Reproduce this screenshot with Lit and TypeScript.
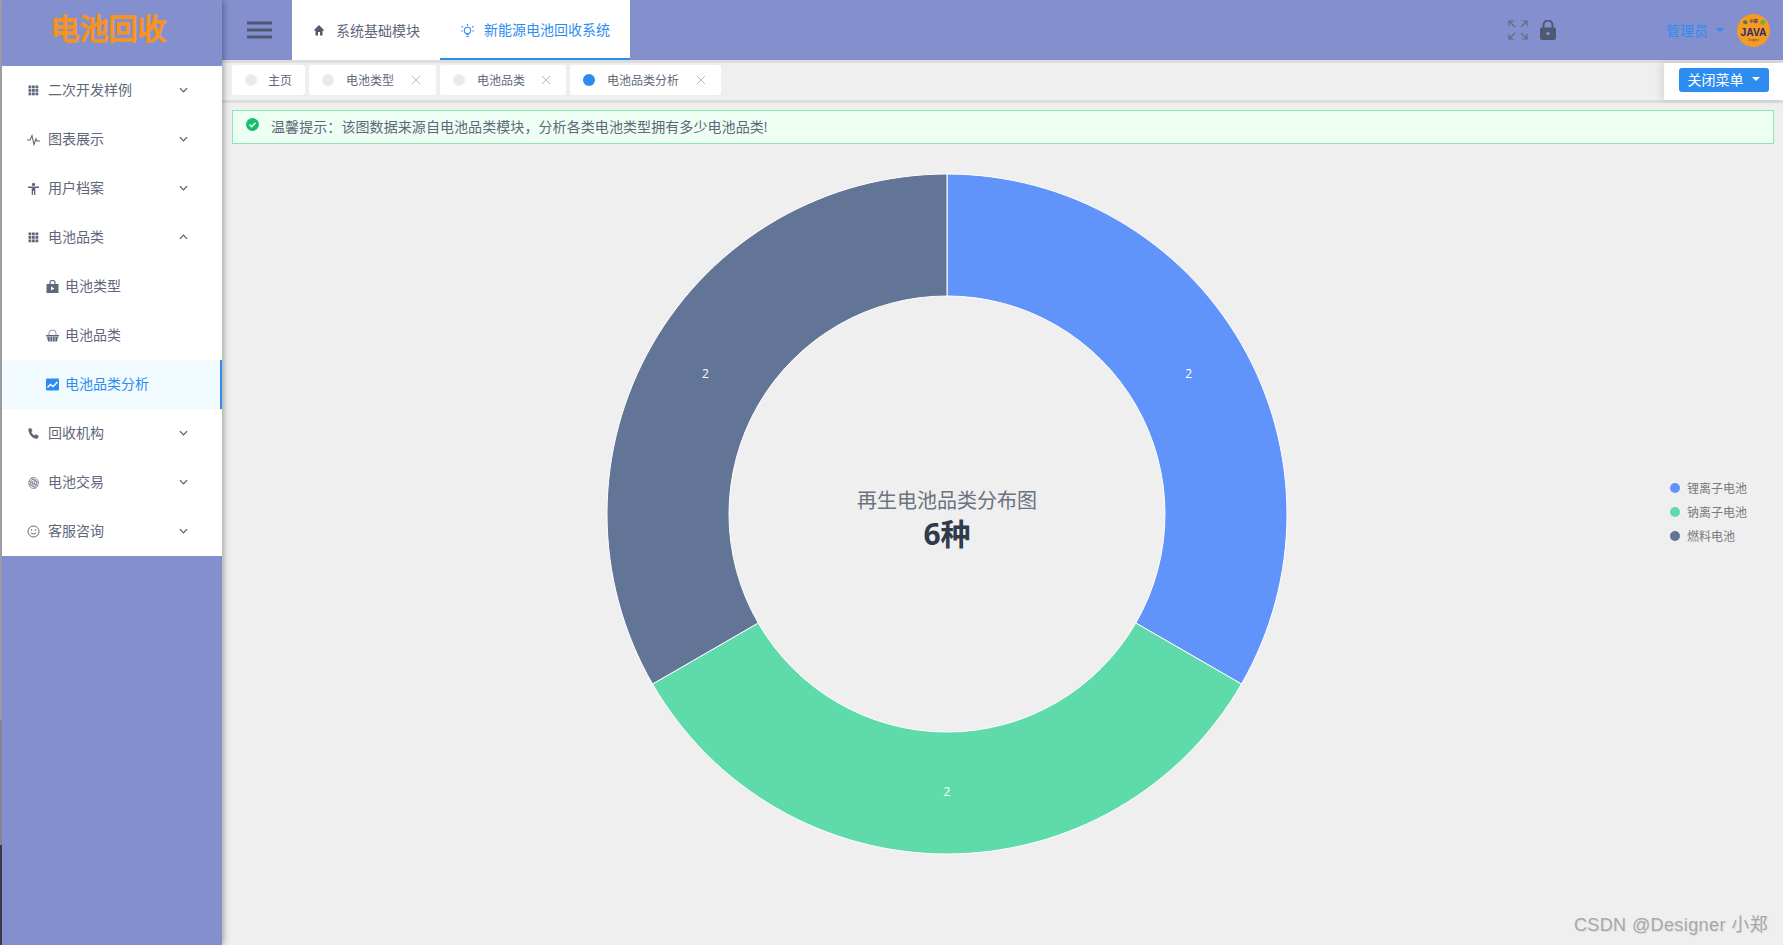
import { LitElement, html, css, svg } from "lit";
import { customElement } from "lit/decorators.js";

const I = {
  grid: svg`<g fill="currentColor">${[0, 1, 2].flatMap((y) => [0, 1, 2].map((x) => svg`<rect x=${1.5 + x * 3.5} y=${1.5 + y * 3.5} width="2.800" height="2.800"/>`))}</g>`,
  pulse: svg`<path d="M0 7h3l2-4.500 2 9 2-5.500 1 2h3" fill="none" stroke="currentColor" stroke-width="1.100"/>`,
  person: svg`<g fill="currentColor"><circle cx="6.500" cy="2.400" r="1.600"/><path d="M1 4.600h11v1.300H8.300V13H7V9H6v4H4.700V5.900H1z"/></g>`,
  bag: svg`<path d="M.5 4h12v9.500H.5z" fill="currentColor"/><path d="M4 4V2.500a2.500 2 0 0 1 5 0V4" fill="none" stroke="currentColor" stroke-width="1.200"/><path d="M5 6.500l3.500 2-3.500 2z" fill="#fff"/>`,
  basket: svg`<path d="M3 6V4a3.500 3 0 0 1 7 0v2" fill="none" stroke="#8a93a5" stroke-width="1"/><path d="M0 6h13v1.500H0zM1 8h11l-1 4.500H2z" fill="currentColor"/><path d="M4 8v4.500M6.500 8v4.500M9 8v4.500" stroke="#fff" stroke-width=".6"/>`,
  chart: svg`<rect x="0" y=".5" width="13" height="12" rx="1" fill="currentColor"/><path d="M1.500 9.500l3-3 2.500 2L11.500 4" fill="none" stroke="#fff" stroke-width="1.400"/>`,
  phone: svg`<path d="M2 1.500l2-.5 1.500 3-1.200 1c.6 1.600 1.700 2.700 3.200 3.400l1.100-1.200 3 1.500-.5 2.200c-.2.600-.8.900-1.500.8C5.500 11.600 2 7.800 1.300 3c0-.7.200-1.200.7-1.500z" fill="currentColor"/>`,
  print: svg`<g fill="none" stroke="#7b8494" stroke-width=".9"><ellipse cx="6.500" cy="7" rx="4.800" ry="5.500"/><ellipse cx="6.500" cy="7" rx="3" ry="3.800"/><ellipse cx="6.500" cy="7" rx="1.300" ry="2"/><path d="M2 5l9 5M2 8l7 4M4 2l8 5"/></g>`,
  smile: svg`<g fill="none" stroke="currentColor" stroke-width="1"><circle cx="6.500" cy="6.500" r="5.500"/><path d="M3.800 7.800c1.400 1.500 4 1.500 5.400 0"/></g><circle cx="4.500" cy="5" r=".8" fill="currentColor"/><circle cx="8.500" cy="5" r=".8" fill="currentColor"/>`,
};

const chevron = (up: boolean) => html`<svg class="chev" viewBox="0 0 10 6"><path d=${up ? "M1 5l4-4 4 4" : "M1 1l4 4 4-4"} fill="none" stroke="currentColor" stroke-width="1.300"/></svg>`;

const menu = [
  { t: "二次开发样例", i: I.grid },
  { t: "图表展示", i: I.pulse },
  { t: "用户档案", i: I.person },
  { t: "电池品类", i: I.grid, open: true },
  { t: "电池类型", i: I.bag, sub: true },
  { t: "电池品类", i: I.basket, sub: true },
  { t: "电池品类分析", i: I.chart, sub: true, active: true },
  { t: "回收机构", i: I.phone },
  { t: "电池交易", i: I.print },
  { t: "客服咨询", i: I.smile },
];

const pageTabs = [
  { t: "主页", w: 73 },
  { t: "电池类型", w: 127, c: true },
  { t: "电池品类", w: 126, c: true },
  { t: "电池品类分析", w: 151, c: true, on: true },
];

const cx = 341, cy = 341, R = 340, r = 218, LR = 279;
const pt = (rad: number, deg: number) => {
  const a = ((deg - 90) * Math.PI) / 180;
  return [cx + rad * Math.cos(a), cy + rad * Math.sin(a)];
};
const slices = [
  { n: "锂离子电池", c: "#6094fb", a: 0 },
  { n: "钠离子电池", c: "#5fdbab", a: 120 },
  { n: "燃料电池", c: "#627597", a: 240 },
];
const slicePath = (a: number) => {
  const [x1, y1] = pt(R, a), [x2, y2] = pt(R, a + 120), [x3, y3] = pt(r, a + 120), [x4, y4] = pt(r, a);
  return `M${x1} ${y1}A${R} ${R} 0 0 1 ${x2} ${y2}L${x3} ${y3}A${r} ${r} 0 0 0 ${x4} ${y4}Z`;
};

@customElement("app-root")
export class AppRoot extends LitElement {
  static styles = css`
    :host { display: flex; position: relative; width: 1783px; height: 945px; overflow: hidden; background: #efefef; color: #5f677a;
      font-family: "Open Sans", "Noto Sans CJK SC", sans-serif; font-size: 14px; }
    .edge { width: 2px; flex: none; background: linear-gradient(#a2a5ad 0, #a2a5ad 720px, #8d8b96 720px, #8d8b96 845px, #3b3f4c 845px); }
    .side { width: 220px; flex: none; background: #8490ce; box-shadow: 2px 0 6px rgba(0,0,0,.3); z-index: 2; display: flex; flex-direction: column; }
    .logo { height: 66px; display: flex; justify-content: center; align-items: flex-start; padding: 9px 7px 0 0; box-sizing: border-box; color: #f7941d;
      font-size: 29px; line-height: 40px; font-weight: 400; -webkit-text-stroke: 1.300px #f7941d; }
    .menu { background: #fff; }
    .item { height: 49px; display: flex; align-items: center; padding: 0 0 3px 25px; position: relative; box-sizing: border-box; }
    .item.sub { padding-left: 44px; }
    .item.active { background: #f0faff; color: #2d8cf0; border-right: 2px solid #2d8cf0; }
    .item .ic { width: 13px; height: 13px; margin: 2px 8px 0 0; flex: none; }
    .item.sub .ic { margin-right: 6px; }
    .chev { position: absolute; left: 177px; top: 21px; width: 9px; height: 6px; color: #515a6e; }
    .main { flex: 1; display: flex; flex-direction: column; min-width: 0; }
    .top { height: 60px; flex: none; background: #8490ce; display: flex; align-items: center; }
    .burger { width: 25px; height: 18px; margin-left: 25px; flex: none; color: #4f5873; }
    .toptabs { margin-left: 20px; height: 60px; width: 338px; background: #fff; display: flex; }
    .tt { height: 60px; display: flex; align-items: center; box-sizing: border-box; }
    .tt.a { width: 148px; padding-left: 20px; }
    .tt.b { width: 190px; padding-left: 20px; color: #2d8cf0; border-bottom: 2px solid #2d8cf0; }
    .tt svg { width: 14px; height: 14px; margin-right: 10px; }
    .tt.b svg { width: 15px; height: 15px; margin: 2px 9px 0 0; }
    .tr { margin-left: auto; display: flex; align-items: center; }
    .fs { width: 20px; height: 20px; color: #5e6880; margin-right: 12px; }
    .lock { width: 16px; height: 20px; color: #4f5873; margin-right: 110px; }
    .admin { color: #2d8cf0; margin-right: 8px; }
    .caret { width: 8px; height: 4px; margin-right: 13px; fill: #2d8cf0; }
    .avatar { width: 33px; height: 33px; margin-right: 13px; }
    .tabsbar { height: 43px; flex: none; display: flex; align-items: center; position: relative; box-shadow: 0 -3px 0 #ddd inset, 0 3px 0 #ddd inset; padding: 1px 0 4px 10px; box-sizing: border-box; gap: 4px; }
    .ptab { height: 30px; background: #fff; border-radius: 3px; display: flex; align-items: center; font-size: 12px; box-sizing: border-box; padding-left: 13px; position: relative; flex: none; }
    .dot { width: 12px; height: 12px; border-radius: 50%; background: #e8eaec; margin-right: 11px; }
    .ptab.closable .dot { margin-right: 12px; }
    .ptab.on .dot { background: #2d8cf0; }
    .x { position: absolute; right: 15px; top: 10px; width: 10px; height: 10px; stroke: #b5b9c0; fill: none; }
    .close { position: absolute; right: 0; top: 3px; bottom: 3px; width: 119px; background: #fff; box-shadow: -3px 0 8px rgba(0,0,0,.1); display: flex; align-items: center; justify-content: center; box-sizing: border-box; padding-bottom: 3px; }
    .btn { width: 90px; height: 24px; background: #2d8cf0; color: #fff; border-radius: 3px; display: flex; align-items: center; justify-content: center; gap: 8px; font-size: 14px; padding-bottom: 2px; box-sizing: border-box; }
    .btn svg { width: 8px; height: 4px; fill: #fff; }
    .alert { margin: 7px 9px 0 10px; height: 34px; flex: none; background: #edfff3; border: 1px solid #8ce6b0; box-sizing: border-box; display: flex; align-items: center; padding: 0 0 2px 13px; letter-spacing: .08px; }
    .alert svg { width: 13px; height: 13px; margin: -3px 12px 0 0; }
    .row { display: flex; margin: 29px 9px 0 10px; height: 682px; }
    .chart { width: 1430px; display: flex; justify-content: center; flex: none; }
    .chart svg { width: 682px; height: 682px; }
    .legend { display: flex; flex-direction: column; justify-content: center; gap: 6px; padding-left: 8px; margin-top: -4px; font-size: 12px; color: #7a7a7a; }
    .li { display: flex; align-items: center; height: 18px; }
    .li i { width: 10px; height: 10px; border-radius: 50%; margin-right: 7px; }
    .wm { position: absolute; right: 15px; bottom: 9px; font: 18px "Liberation Sans", "Noto Sans CJK SC", sans-serif; letter-spacing: .4px; color: #a8a8a8; text-shadow: 1px 1px 1px #ddd; }
  `;

  render() {
    return html`
      <div class="edge"></div>
      <aside class="side">
        <div class="logo">电池回收</div>
        <nav class="menu">
          ${menu.map((m) => html`
            <div class="item ${m.sub ? "sub" : ""} ${m.active ? "active" : ""}">
              <svg class="ic" viewBox="0 0 13 13">${m.i}</svg>
              <span>${m.t}</span>
              ${m.sub ? "" : chevron(!!m.open)}
            </div>`)}
        </nav>
      </aside>
      <div class="main">
        <header class="top">
          <svg class="burger" viewBox="0 0 25 18"><path d="M0 2h25M0 9h25M0 16h25" stroke="currentColor" stroke-width="3"/></svg>
          <div class="toptabs">
            <div class="tt a">
              <svg viewBox="0 0 14 14"><path d="M7 2L1.500 7.500H3.500V12.500H6V9H8V12.500H10.500V7.500H12.500z" fill="#515a6e"/></svg>
              系统基础模块
            </div>
            <div class="tt b">
              <svg viewBox="0 0 14 14" fill="none" stroke="#2d8cf0" stroke-width="1"><circle cx="7" cy="7" r="3"/><path d="M5.500 10.500h3M6 12.500h2M7 1v1.500M1.500 3l1.300 1M12.500 3l-1.300 1M1 7.500h1.500M11.500 7.500H13"/></svg>
              新能源电池回收系统
            </div>
          </div>
          <div class="tr">
            <svg class="fs" viewBox="0 0 20 20" fill="none" stroke="currentColor" stroke-width="1.100"><path d="M1 6V1h5M1 1l6 6M14 1h5v5M19 1l-6 6M1 14v5h5M1 19l6-6M19 14v5h-5M19 19l-6-6"/></svg>
            <svg class="lock" viewBox="0 0 16 20"><path d="M3.500 8V5a4.500 4.500 0 0 1 9 0v3" fill="none" stroke="currentColor" stroke-width="2"/><rect y="7.500" width="16" height="12.500" rx="2" fill="currentColor"/><circle cx="8" cy="13.500" r="1.800" fill="#8490ce"/></svg>
            <span class="admin">管理员</span>
            <svg class="caret" viewBox="0 0 8 4"><path d="M0 0h8L4 4z"/></svg>
            <svg class="avatar" viewBox="0 0 32 32">
              <circle cx="16" cy="16" r="16" fill="#f59a23"/>
              <circle cx="8" cy="8" r="2" fill="#3f7f4f"/><circle cx="25" cy="8" r="2.500" fill="#84a83c"/>
              <text x="16" y="9" font-size="4" text-anchor="middle" fill="#2b2f6b" font-weight="700">小郑</text>
              <text x="16" y="21" font-size="10" text-anchor="middle" fill="#2b2f6b" font-weight="700" font-family="Liberation Sans">JAVA</text>
              <text x="16" y="26" font-size="2.500" text-anchor="middle" fill="#2b2f6b">Designer</text>
            </svg>
          </div>
        </header>
        <div class="tabsbar">
          ${pageTabs.map((p) => html`
            <div class="ptab ${p.on ? "on" : ""} ${p.c ? "closable" : ""}" style="width:${p.w}px">
              <span class="dot"></span>${p.t}
              ${p.c ? html`<svg class="x" viewBox="0 0 10 10"><path d="M1 1l8 8M9 1l-8 8"/></svg>` : ""}
            </div>`)}
          <div class="close">
            <div class="btn">关闭菜单<svg viewBox="0 0 8 4"><path d="M0 0h8L4 4z"/></svg></div>
          </div>
        </div>
        <div class="alert">
          <svg viewBox="0 0 13 13"><circle cx="6.500" cy="6.500" r="6.500" fill="#19be6b"/><path d="M3.500 6.500l2.200 2.200 3.800-4" fill="none" stroke="#fff" stroke-width="1.300"/></svg>
          温馨提示：该图数据来源自电池品类模块，分析各类电池类型拥有多少电池品类!
        </div>
        <div class="row">
          <div class="chart">
            <svg viewBox="0 0 682 682">
              ${slices.map((s) => svg`<path d=${slicePath(s.a)} fill=${s.c} stroke="#fff" stroke-width="1"/>`)}
              ${slices.map((s) => {
                const [x, y] = pt(LR, s.a + 60);
                return svg`<text x=${x} y=${y + 3} text-anchor="middle" font-size="12" fill="#fff">2</text>`;
              })}
              <text x=${cx} y=${cy - 6} text-anchor="middle" font-size="20" fill="#6b7280">再生电池品类分布图</text>
              <text x=${cx} y=${cy + 31} text-anchor="middle" font-size="30" font-weight="700" fill="#2f3a4a">6种</text>
            </svg>
          </div>
          <div class="legend">
            ${slices.map((s) => html`<div class="li"><i style="background:${s.c}"></i>${s.n}</div>`)}
          </div>
        </div>
      </div>
      <div class="wm">CSDN @Designer 小郑</div>
    `;
  }
}
